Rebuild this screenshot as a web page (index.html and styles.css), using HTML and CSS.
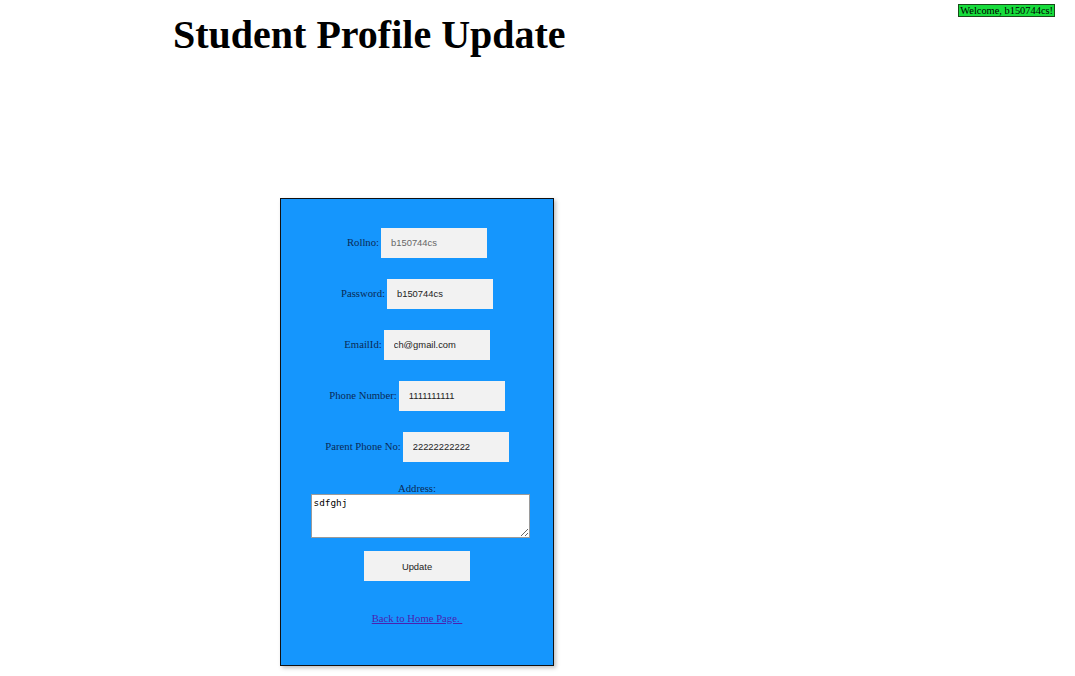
FILE: index.html
```html
<!DOCTYPE html>
<html>
<head>
<meta charset="utf-8">
<title>Student Profile Update</title>
<link rel="stylesheet" href="styles.css">
</head>
<body>
<span class="welcome">Welcome, b150744cs!</span>
<h1 class="title">Student Profile Update</h1>
<div class="card">
  <form class="form">
    <div class="row"><label class="lbl">Rollno:</label><input class="field readonly" type="text" value="b150744cs" readonly></div>
    <div class="row"><label class="lbl">Password:</label><input class="field" type="text" value="b150744cs"></div>
    <div class="row"><label class="lbl">EmailId:</label><input class="field" type="text" value="ch@gmail.com"></div>
    <div class="row"><label class="lbl">Phone Number:</label><input class="field" type="text" value="1111111111"></div>
    <div class="row"><label class="lbl">Parent Phone No:</label><input class="field" type="text" value="22222222222"></div>
    <div class="addr">
      <label class="lbl">Address:</label>
      <textarea class="area">sdfghj</textarea>
    </div>
    <button class="btn" type="button">Update</button>
    <a class="back" href="#">Back to Home Page. </a>
  </form>
</div>
</body>
</html>
```
FILE: styles.css
```css
html, body {
  margin: 0;
  padding: 0;
}
body {
  font-family: "Liberation Serif", "Times New Roman", serif;
  background: #ffffff;
  color: #000;
  padding: 8px 8px 70px 8px;
  position: relative;
}
.welcome {
  position: absolute;
  top: 4px;
  right: 20px;
  background: #17dd3c;
  border: 1px solid #1a4a1a;
  font-size: 10.4px;
  line-height: 11px;
  padding: 0 1px;
}
.title {
  font-size: 40px;
  font-weight: bold;
  margin: 4px 0 0 165px;
  line-height: 46px;
}
.card {
  width: 272px;
  margin: 140px 0 0 272px;
  background: #1596fd;
  border: 1px solid #111;
  box-shadow: 2px 2px 4px rgba(0,0,0,0.25);
}
.form {
  display: flex;
  flex-direction: column;
  align-items: center;
  padding: 29px 0 41px 0;
}
.row {
  display: flex;
  align-items: center;
  justify-content: center;
  gap: 2px;
  height: 30px;
  margin-bottom: 21px;
}
.row .lbl {
  margin-bottom: 2px;
}
.lbl {
  font-family: "Liberation Serif", "Times New Roman", serif;
  font-size: 10.7px;
  color: #0a2a55;
}
.field {
  box-sizing: border-box;
  width: 106px;
  height: 30px;
  border: none;
  background: #f2f2f2;
  padding: 0 10px 1px 10px;
  font-family: "Liberation Sans", Arial, sans-serif;
  font-size: 9.4px;
  color: #222;
  outline: none;
}
.field.readonly {
  color: #666;
}
.addr {
  display: flex;
  flex-direction: column;
  align-items: center;
  margin-top: -1px;
}
.addr .lbl {
  line-height: 12px;
  height: 12px;
}
.area {
  box-sizing: border-box;
  width: 219px;
  height: 44px;
  margin: 0 0 0 6px;
  border: 1px solid #9a9a9a;
  background: #fff;
  font-family: "DejaVu Sans Mono", "Liberation Mono", monospace;
  font-size: 9.4px;
  padding: 2px;
  resize: both;
}
.btn {
  margin-top: 13px;
  width: 106px;
  height: 30px;
  border: none;
  background: #f2f2f2;
  font-family: "Liberation Sans", Arial, sans-serif;
  font-size: 9.4px;
  color: #222;
}
.back {
  margin-top: 31px;
  font-size: 10.7px;
  line-height: 12px;
  color: #4a22b0;
  text-decoration: underline;
  white-space: pre;
}
```
